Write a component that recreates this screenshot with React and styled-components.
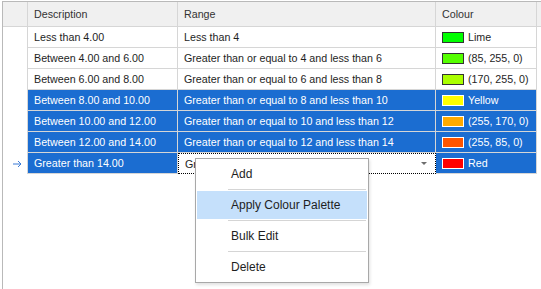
import React from "react";
import styled, { createGlobalStyle } from "styled-components";

const GlobalStyle = createGlobalStyle`
  html, body {
    margin: 0;
    padding: 0;
    background: #fff;
    overflow: hidden;
  }
  body {
    font-family: "Liberation Sans", Arial, sans-serif;
  }
`;

const SELECT_BLUE = "#1b6dd1";

const rows = [
  { desc: "Less than 4.00", range: "Less than 4", color: "#00ff00", label: "Lime" },
  { desc: "Between 4.00 and 6.00", range: "Greater than or equal to 4 and less than 6", color: "#55ff00", label: "(85, 255, 0)" },
  { desc: "Between 6.00 and 8.00", range: "Greater than or equal to 6 and less than 8", color: "#aaff00", label: "(170, 255, 0)" },
  { desc: "Between 8.00 and 10.00", range: "Greater than or equal to 8 and less than 10", color: "#ffff00", label: "Yellow", selected: true },
  { desc: "Between 10.00 and 12.00", range: "Greater than or equal to 10 and less than 12", color: "#ffaa00", label: "(255, 170, 0)", selected: true },
  { desc: "Between 12.00 and 14.00", range: "Greater than or equal to 12 and less than 14", color: "#ff5500", label: "(255, 85, 0)", selected: true },
  { desc: "Greater than 14.00", range: "Greater than or equal to 14", color: "#ff0000", label: "Red", selected: true, focused: true },
];

const menuItems = ["Add", "Apply Colour Palette", "Bulk Edit", "Delete"];

// Grid wrapper
const Grid = styled.div`
  position: relative;
  margin: 1px 0 0 2px;
  height: 300px;
  border-left: 1px solid #b9b9b9;
  border-top: 1px solid #b9b9b9;
  font-size: 10.7px;
  color: #1e1e1e;
`;

const HeaderRow = styled.div`
  display: flex;
  height: 25px;
  background: #f0f0f0;
  border-bottom: 1px solid #d6d6d6;
  box-sizing: border-box;
`;

const HeaderCell = styled.div`
  box-sizing: border-box;
  width: ${(p) => p.$w}px;
  flex: ${(p) => (p.$fill ? 1 : "none")};
  border-right: ${(p) => (p.$fill ? "none" : "1px solid #d6d6d6")};
  padding-left: 6px;
  display: flex;
  align-items: center;
  color: #333;
`;

const Row = styled.div`
  display: flex;
  height: 21px;
`;

const Indicator = styled.div`
  box-sizing: border-box;
  width: 25px;
  border-right: 1px solid #d6d6d6;
  display: flex;
  align-items: center;
  justify-content: center;
  padding-left: 4px;
`;

const Cell = styled.div`
  box-sizing: border-box;
  width: ${(p) => p.$w}px;
  border-right: 1px solid #d6d6d6;
  border-bottom: 1px solid #d6d6d6;
  padding-left: 6px;
  display: flex;
  align-items: center;
  white-space: nowrap;
  overflow: hidden;
  background: ${(p) => (p.$selected ? SELECT_BLUE : "#fff")};
  color: ${(p) => (p.$selected ? "#fff" : "#1e1e1e")};
`;

const EditorCell = styled.div`
  box-sizing: border-box;
  width: ${(p) => p.$w}px;
  border: 1px dotted #000;
  padding-left: 6px;
  padding-right: 8px;
  display: flex;
  align-items: center;
  justify-content: space-between;
  white-space: nowrap;
  background: #fff;
  color: #1e1e1e;
`;

// editor text is hidden behind the context menu past its left edge
const EditorText = styled.span`
  max-width: 11px;
  overflow: hidden;
`;

const Caret = styled.span`
  width: 0;
  height: 0;
  border-left: 3px solid transparent;
  border-right: 3px solid transparent;
  border-top: 3px solid #6d6d6d;
`;

const Swatch = styled.span`
  box-sizing: border-box;
  width: 22px;
  height: 11px;
  margin-right: 4px;
  background: ${(p) => p.$color};
  border: 1px solid ${(p) => (p.$selected ? "#fff" : "#333")};
`;

// Context menu
const Menu = styled.div`
  position: absolute;
  left: 192px;
  top: 156px;
  width: 174px;
  box-sizing: border-box;
  background: #fff;
  border: 1px solid #a8a8a8;
  padding: 1px;
  box-shadow: 1px 2px 3px rgba(0, 0, 0, 0.12);
  font-size: 12px;
  color: #1e1e1e;
`;

const MenuItem = styled.div`
  height: 28px;
  display: flex;
  align-items: center;
  padding-left: 34px;
  background: ${(p) => (p.$hover ? "#c5e0fb" : "transparent")};
`;

const Separator = styled.div`
  height: 1px;
  margin: 1px 1px 1px 31px;
  background: #d5d5d5;
`;

const ArrowIcon = () => (
  <svg width="9" height="8" viewBox="0 0 9 8">
    <path d="M0 4H8M5 1L8 4L5 7" fill="none" stroke="#3b7bd6" strokeWidth="1" />
  </svg>
);

export default function App() {
  return (
    <>
      <GlobalStyle />
      <Grid>
        <HeaderRow>
          <HeaderCell $w={25} />
          <HeaderCell $w={150}>Description</HeaderCell>
          <HeaderCell $w={258}>Range</HeaderCell>
          <HeaderCell $w={101}>Colour</HeaderCell>
          <HeaderCell $fill />
        </HeaderRow>
        {rows.map((r) => (
          <Row key={r.desc}>
            <Indicator>{r.focused && <ArrowIcon />}</Indicator>
            <Cell $w={150} $selected={r.selected}>{r.desc}</Cell>
            {r.focused ? (
              <EditorCell $w={258}>
                <EditorText>{r.range}</EditorText>
                <Caret />
              </EditorCell>
            ) : (
              <Cell $w={258} $selected={r.selected}>{r.range}</Cell>
            )}
            <Cell $w={101} $selected={r.selected}>
              <Swatch $color={r.color} $selected={r.selected} />
              {r.label}
            </Cell>
          </Row>
        ))}
        <Menu>
          {menuItems.map((item, i) => (
            <React.Fragment key={item}>
              {i > 0 && <Separator />}
              <MenuItem $hover={i === 1}>{item}</MenuItem>
            </React.Fragment>
          ))}
        </Menu>
      </Grid>
    </>
  );
}
